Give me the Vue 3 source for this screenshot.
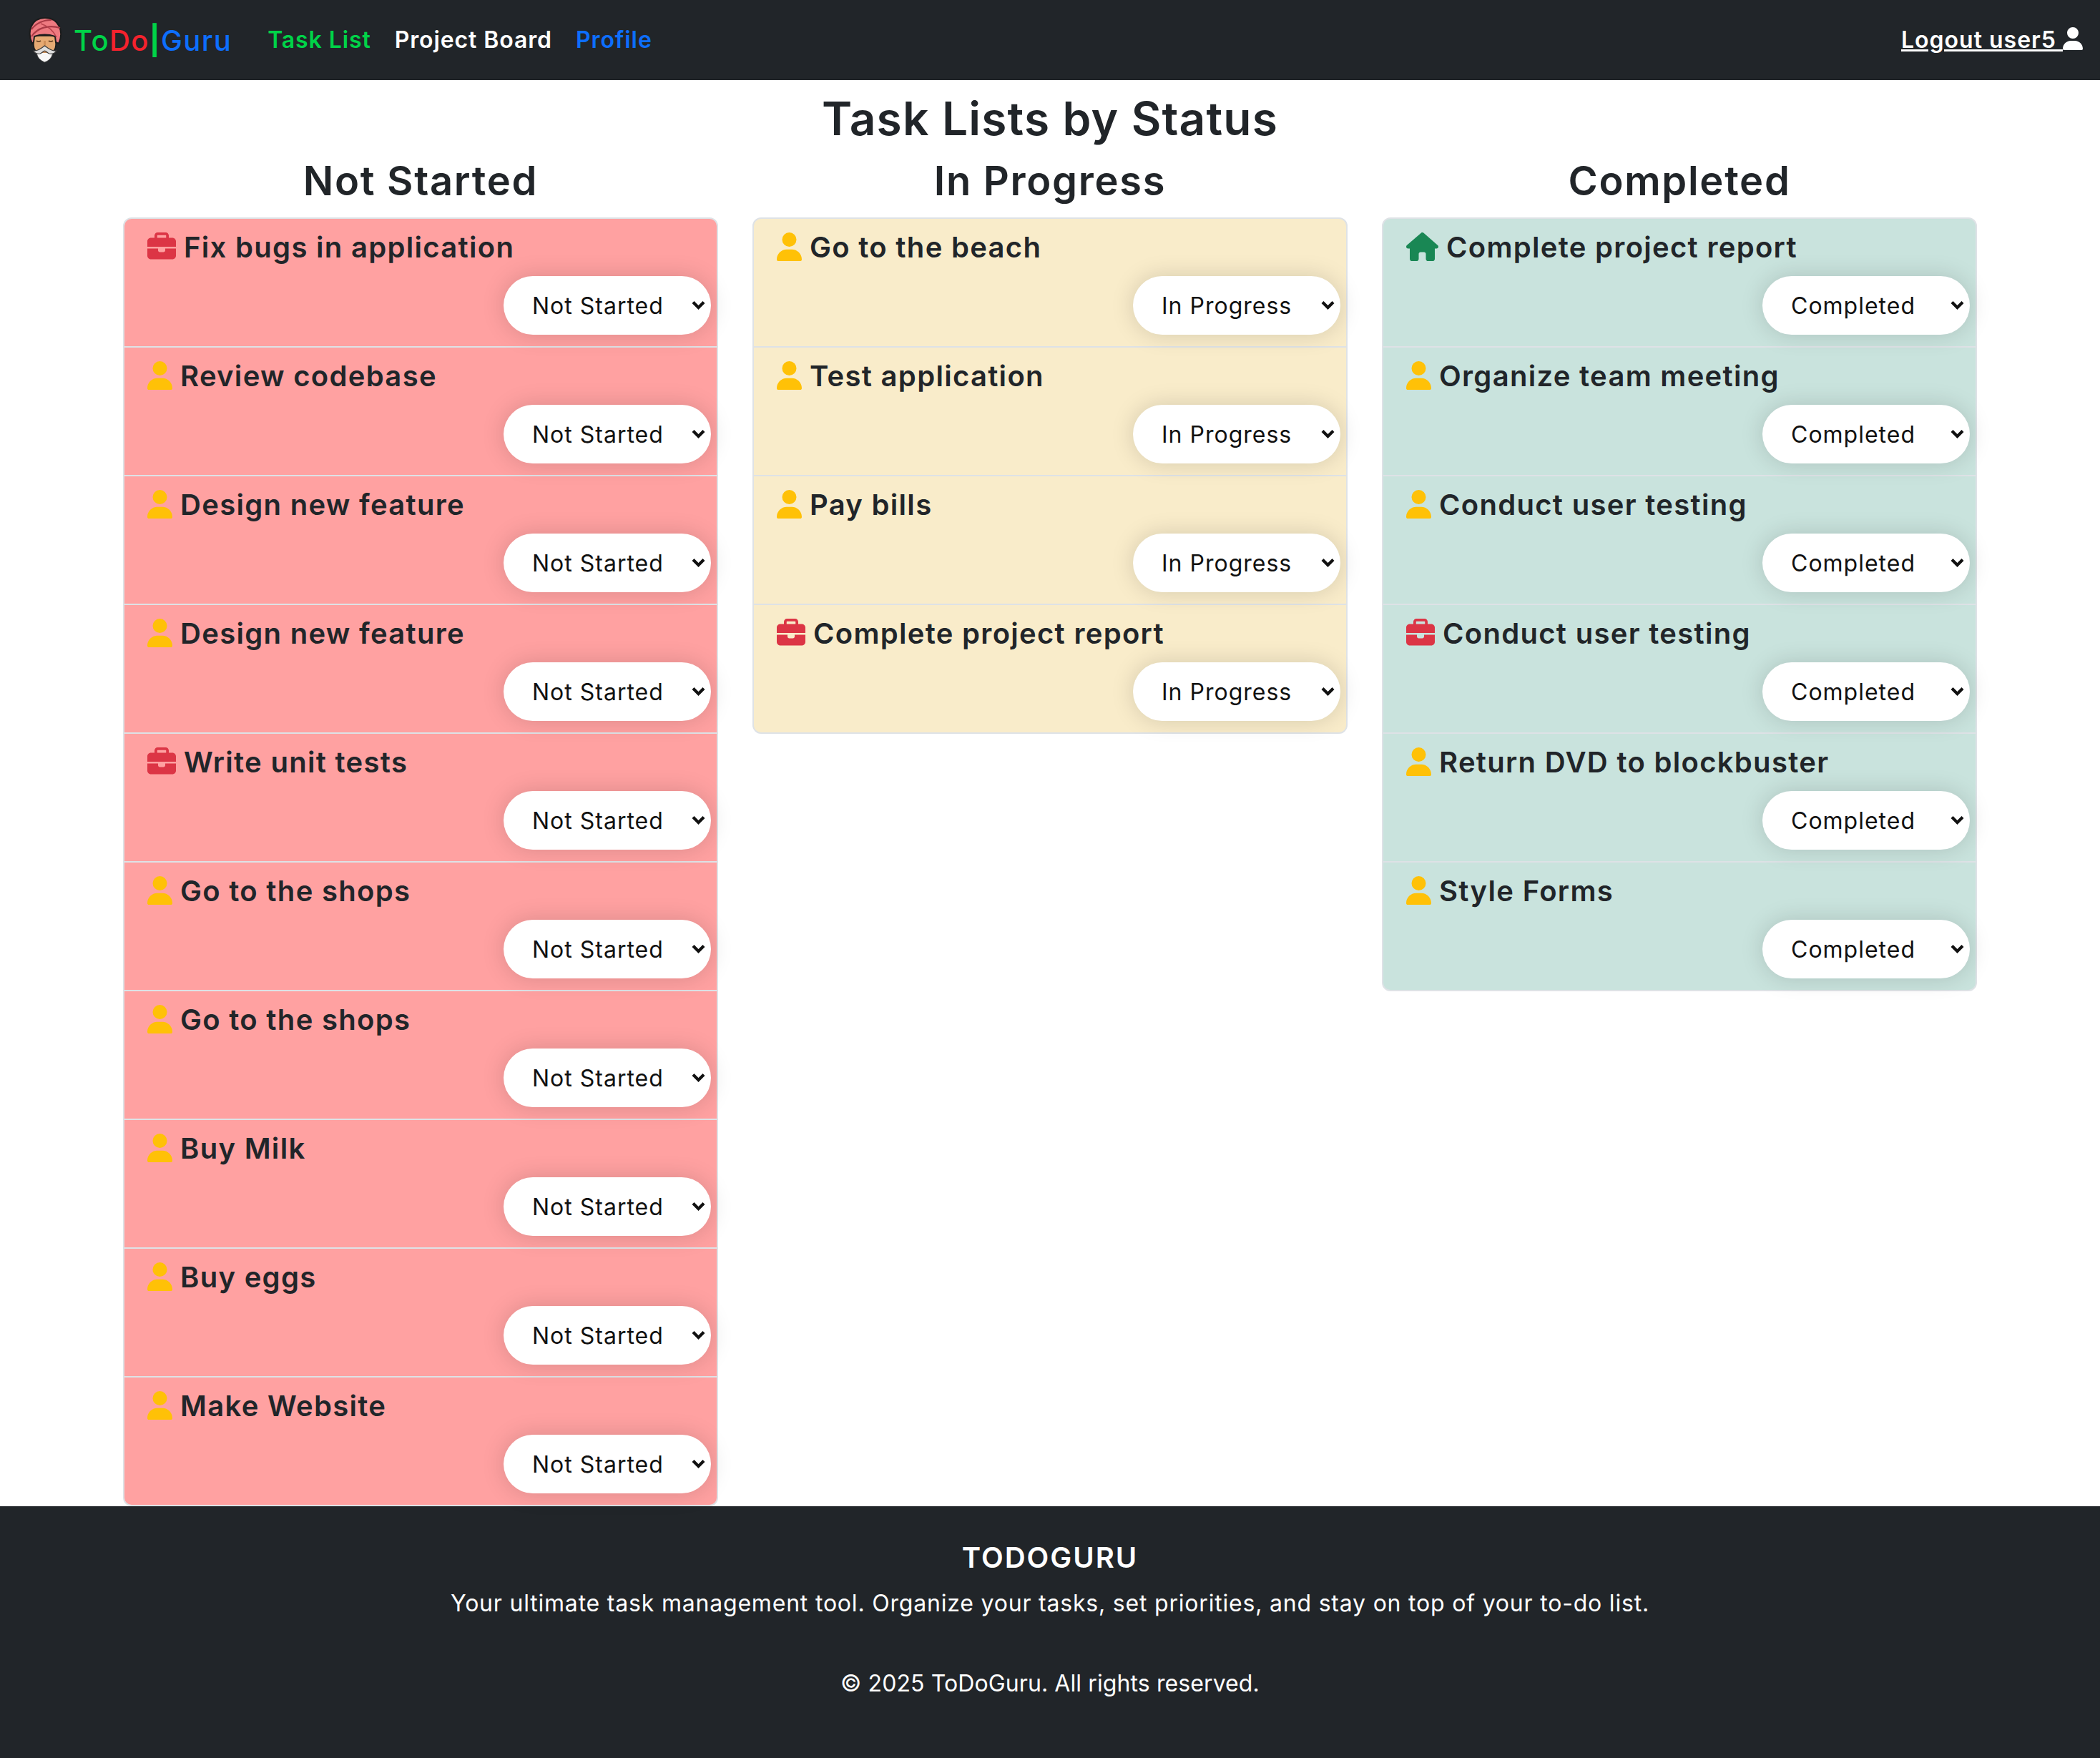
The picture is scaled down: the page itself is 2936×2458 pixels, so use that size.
<script setup>
const columns = [
  {
    title: 'Not Started',
    tone: 'tone-red',
    tasks: [
      { name: 'Fix bugs in application', icon: 'work' },
      { name: 'Review codebase', icon: 'user' },
      { name: 'Design new feature', icon: 'user' },
      { name: 'Design new feature', icon: 'user' },
      { name: 'Write unit tests', icon: 'work' },
      { name: 'Go to the shops', icon: 'user' },
      { name: 'Go to the shops', icon: 'user' },
      { name: 'Buy Milk', icon: 'user' },
      { name: 'Buy eggs', icon: 'user' },
      { name: 'Make Website', icon: 'user' }
    ]
  },
  {
    title: 'In Progress',
    tone: 'tone-yellow',
    tasks: [
      { name: 'Go to the beach', icon: 'user' },
      { name: 'Test application', icon: 'user' },
      { name: 'Pay bills', icon: 'user' },
      { name: 'Complete project report', icon: 'work' }
    ]
  },
  {
    title: 'Completed',
    tone: 'tone-green',
    tasks: [
      { name: 'Complete project report', icon: 'home' },
      { name: 'Organize team meeting', icon: 'user' },
      { name: 'Conduct user testing', icon: 'user' },
      { name: 'Conduct user testing', icon: 'work' },
      { name: 'Return DVD to blockbuster', icon: 'user' },
      { name: 'Style Forms', icon: 'user' }
    ]
  }
]
const statuses = ['Not Started', 'In Progress', 'Completed']
const userPath = 'M224 256A128 128 0 1 0 224 0a128 128 0 1 0 0 256zm-45.7 48C79.8 304 0 383.8 0 482.3C0 498.7 13.3 512 29.700 512H418.3c16.4 0 29.7-13.3 29.7-29.7C448 383.8 368.2 304 269.7 304H178.3z'
</script>

<template>
  <div class="page">
    <nav class="navbar">
      <div class="brand">
        <svg class="logo" viewBox="0 0 48 64">
          <!-- face -->
          <path d="M7 26h31v13c0 7-5 11-8 12H15c-3-1-8-5-8-12z" fill="#e6aa73" stroke="#1c1c1c" stroke-width="1.500" />
          <path d="M11 33c2 1.500 4 1.500 6 0M28 33c2 1.500 4 1.500 6 0" fill="none" stroke="#6b4526" stroke-width="1.800" />
          <path d="M21 33h3v7h-3z" fill="#cf8f58" />
          <!-- turban -->
          <path d="M5 37C-3 20 4 1 23 1s27 19 19 36l-4-2-1-8c-9-3-20-3-29 0l-1 8z" fill="#ee7a80" stroke="#1c1c1c" stroke-width="2" />
          <path d="M4 27C12 15 28 10 44 15M4 17C11 8 21 4 32 4" fill="none" stroke="#a93a45" stroke-width="2.200" />
          <path d="M17 9c9 3 17 9 22 19" fill="none" stroke="#b8424c" stroke-width="1.500" />
          <!-- beard -->
          <path d="M11 48h23c0 7-5 13-11.500 15C16 61 11 55 11 48z" fill="#f7f7f7" stroke="#444" stroke-width="1" />
          <path d="M18 46h9v4h-9z" fill="#c78d5c" />
          <!-- moustache -->
          <path d="M6 47c4 1 10-2 16.500-7C29 45 35 48 39 47c-2 3-6 5-10 4-3-1-4.500-4-6.500-4s-3.500 3-6.500 4c-4 1-8-1-9.500-4z" fill="#dedede" stroke="#3a3a3a" stroke-width="1.200" />
        </svg>
        <span class="brand-name"><span class="c-green">To</span><span class="c-red">Do</span><span class="c-green brand-bar">|</span><span class="c-blue">Guru</span></span>
      </div>
      <ul class="nav-links">
        <li class="c-green">Task List</li>
        <li class="c-white">Project Board</li>
        <li class="c-blue">Profile</li>
      </ul>
      <a class="logout" href="#">Logout user5 <svg class="logout-icon" viewBox="0 0 448 512"><path :d="userPath" fill="#fff" /></svg></a>
    </nav>

    <main class="board">
      <h2 class="board-title">Task Lists by Status</h2>
      <div class="columns">
        <section v-for="col in columns" :key="col.title" class="column">
          <h3 class="column-title">{{ col.title }}</h3>
          <ul class="task-list" :class="col.tone">
            <li v-for="(task, i) in col.tasks" :key="i" class="task">
              <h5 class="task-name">
                <svg v-if="task.icon === 'user'" class="ico ico-user" viewBox="0 0 448 512"><path :d="userPath" /></svg>
                <svg v-else-if="task.icon === 'work'" class="ico ico-work" viewBox="0 0 512 512"><path d="M184 48H328c4.400 0 8 3.600 8 8V96H176V56c0-4.400 3.600-8 8-8zm-56 8V96H64C28.700 96 0 124.700 0 160v96H192 320 512V160c0-35.300-28.700-64-64-64H384V56c0-30.900-25.100-56-56-56H184c-30.900 0-56 25.100-56 56zM512 288H320v32c0 17.700-14.300 32-32 32H224c-17.700 0-32-14.300-32-32V288H0V416c0 35.300 28.700 64 64 64H448c35.300 0 64-28.700 64-64V288z" /></svg>
                <svg v-else class="ico ico-home" viewBox="0 0 576 512"><path d="M575.800 255.500c0 18-15 32.100-32 32.100h-32l.7 160.200c0 2.700-.2 5.400-.5 8.100V472c0 22.100-17.900 40-40 40H456c-1.100 0-2.200 0-3.300-.1c-1.400 .1-2.800 .1-4.200 .1H416 392c-22.100 0-40-17.900-40-40V448 384c0-17.700-14.300-32-32-32H256c-17.700 0-32 14.300-32 32v64 24c0 22.100-17.900 40-40 40H160 128.100c-1.500 0-3-.1-4.500-.2c-1.200 .1-2.400 .2-3.600 .2H104c-22.100 0-40-17.900-40-40V360c0-.9 0-1.900 .1-2.800V287.600H32c-18 0-32-14-32-32.100c0-9 3-17 10-24L266.400 8c7-7 15-8 22-8s15 2 21 7L564.800 231.500c8 7 12 15 11 24z" /></svg>
                <span class="task-text">{{ task.name }}</span>
              </h5>
              <div class="status-row">
                <div class="status-box">
                  <select class="status" :value="col.title">
                    <option v-for="s in statuses" :key="s">{{ s }}</option>
                  </select>
                  <svg class="chevron" viewBox="0 0 19 13"><path d="M2 2.500l7.500 7.500 7.500-7.500" fill="none" stroke="#111" stroke-width="4.200" /></svg>
                </div>
              </div>
            </li>
          </ul>
        </section>
      </div>
    </main>

    <footer class="footer">
      <h5 class="footer-title">TODOGURU</h5>
      <p class="footer-text">Your ultimate task management tool. Organize your tasks, set priorities, and stay on top of your to-do list.</p>
      <p class="footer-copy">© 2025 ToDoGuru. All rights reserved.</p>
    </footer>
  </div>
</template>

<style>
body {
  margin: 0;
  background: #fff;
}
</style>

<style scoped>
.page {
  font-family: Inter, "Liberation Sans", sans-serif;
  color: #212529;
}

.navbar {
  height: 112px;
  background: #212529;
  display: flex;
  align-items: center;
  padding: 0 24px 0 40px;
  box-sizing: border-box;
}

.brand {
  display: flex;
  align-items: center;
}

.logo {
  width: 48px;
  height: 64px;
  margin-right: 15px;
}

.brand-name {
  font-size: 40px;
  font-weight: 500;
  letter-spacing: 1.4px;
}

.brand-bar {
  font-weight: 700;
}

.nav-links {
  display: flex;
  gap: 33px;
  list-style: none;
  margin: 0 0 0 50px;
  padding: 0 0 2px;
  font-size: 32px;
  font-weight: 600;
  letter-spacing: 0.9px;
}

.c-green { color: #00d348; }
.c-red { color: #f5222d; }
.c-blue { color: #0d6efd; }
.c-white { color: #fff; }

.logout {
  margin-left: auto;
  padding-bottom: 2px;
  color: #fff;
  font-size: 32px;
  font-weight: 600;
  letter-spacing: 1px;
}

.logout-icon {
  width: 28px;
  height: 32px;
  vertical-align: -3px;
}

.board {
  width: 2640px;
  margin: 0 auto;
  padding-top: 16px;
}

.board-title {
  margin: 0 0 16px;
  font-size: 64px;
  font-weight: 600;
  line-height: 75px;
  padding-bottom: 2px;
  letter-spacing: 1.2px;
  text-align: center;
}

.columns {
  display: grid;
  grid-template-columns: repeat(3, 1fr);
}

.column {
  padding: 0 24px;
}

.column-title {
  margin: 0 0 16px;
  font-size: 56px;
  font-weight: 600;
  line-height: 65px;
  padding-bottom: 2px;
  letter-spacing: 1.7px;
  text-align: center;
}

.task-list {
  list-style: none;
  margin: 0;
  padding: 0;
  border: 2px solid #dee2e6;
  border-radius: 12px;
}

.tone-red { background: #ffa1a1; }
.tone-yellow { background: #f9ecca; }
.tone-green { background: #c9e3dd; }

.task {
  padding: 16px 32px;
  height: 178px;
  box-sizing: border-box;
}

.task + .task {
  border-top: 2px solid #dee2e6;
  height: 180px;
}

.task-name {
  margin: 0 0 16px;
  font-size: 40px;
  font-weight: 600;
  line-height: 48px;
  letter-spacing: 1.3px;
}

.ico {
  height: 40px;
  vertical-align: -5px;
  margin-right: 11px;
}

.ico-user { width: 35px; fill: #ffc107; }
.ico-work { width: 40px; fill: #dc3545; }
.ico-home { width: 45px; fill: #198754; }

.status-row {
  display: flex;
  justify-content: flex-end;
  margin-right: -24px;
}

.status-box {
  position: relative;
  width: 290px;
  height: 82px;
}

.status {
  width: 100%;
  height: 100%;
  appearance: none;
  border: none;
  border-radius: 41px;
  background: #fff;
  padding: 0 0 0 40px;
  font-family: Inter, "Liberation Sans", sans-serif;
  font-size: 32px;
  letter-spacing: 1px;
  color: #111;
  box-shadow: 0 0 32px rgba(0, 0, 0, 0.15);
}

.chevron {
  position: absolute;
  right: 8px;
  top: 34px;
  width: 19px;
  height: 13px;
  pointer-events: none;
}

.footer {
  background: #212529;
  color: #fff;
  text-align: center;
  padding: 48px 0;
}

.footer-title {
  margin: 0 0 16px;
  font-size: 40px;
  font-weight: 600;
  line-height: 48px;
  letter-spacing: 2px;
}

.footer-text {
  margin: 0 0 64px;
  font-size: 32px;
  line-height: 48px;
  letter-spacing: 0.8px;
}

.footer-copy {
  margin: 0 0 32px;
  font-size: 32px;
  line-height: 48px;
  letter-spacing: 0.1px;
}
</style>
